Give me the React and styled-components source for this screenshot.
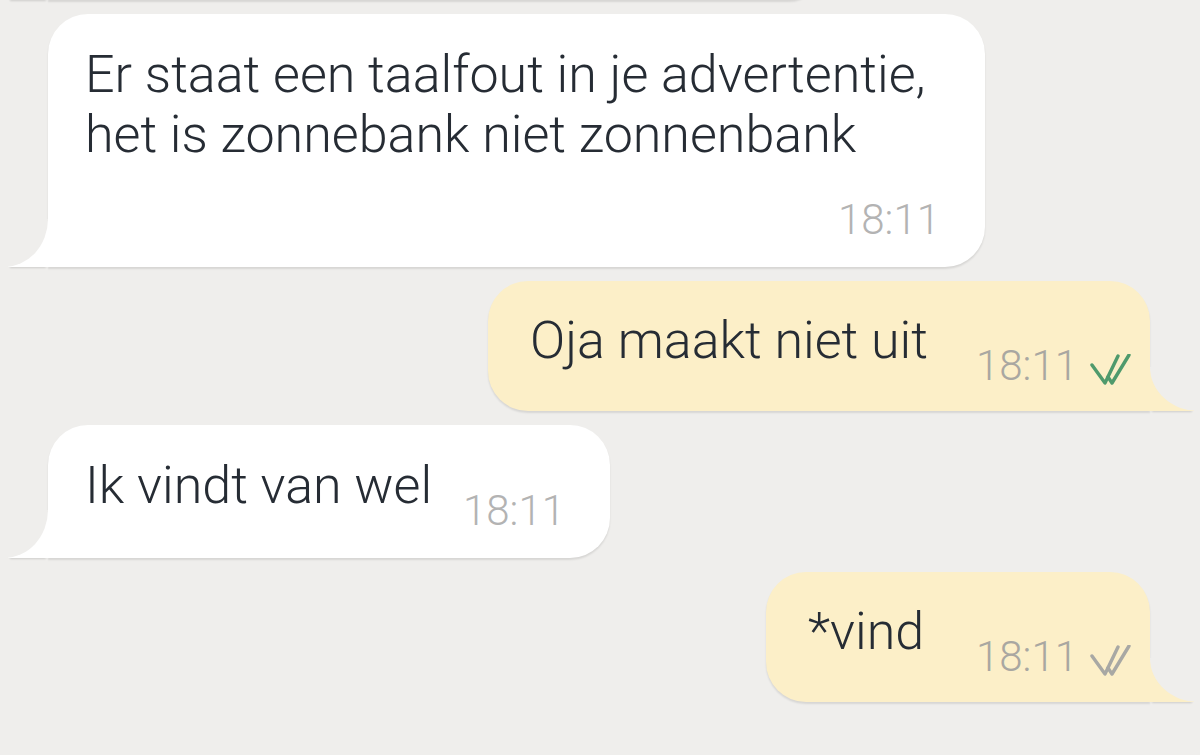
import React from 'react';
import styled, { createGlobalStyle, css } from 'styled-components';

const BG = '#efeeec';

const GlobalStyle = createGlobalStyle`
  html, body {
    margin: 0;
    padding: 0;
    background: ${BG};
    overflow: hidden;
  }
  body {
    font-family: Roboto, 'Liberation Sans', sans-serif;
  }
`;

const Chat = styled.div`
  display: flex;
  flex-direction: column;
  gap: 14px;
  width: 1200px;
  height: 755px;
  background: ${BG};
`;

const Row = styled.div`
  display: flex;
  justify-content: ${(p) => (p.$side === 'out' ? 'flex-end' : 'flex-start')};
  padding: ${(p) => (p.$side === 'out' ? '0 50px 0 0' : '0 0 0 48px')};
`;

// the tail: a filled box with a background-coloured rounded box over it
const tailIn = css`
  border-bottom-left-radius: 0;
  &::before,
  &::after {
    content: '';
    position: absolute;
    bottom: 0;
  }
  &::before {
    left: -40px;
    width: 40px;
    height: 46px;
    background: #ffffff;
    box-shadow: 0 3px 2px -2px rgba(0, 0, 0, 0.14);
  }
  &::after {
    left: -44px;
    width: 44px;
    height: 48px;
    background: ${BG};
    border-bottom-right-radius: 44px 48px;
  }
`;

const tailOut = css`
  border-bottom-right-radius: 0;
  &::before,
  &::after {
    content: '';
    position: absolute;
    bottom: 0;
  }
  &::before {
    right: -44px;
    width: 44px;
    height: 42px;
    background: #fcefc8;
    box-shadow: 0 3px 2px -2px rgba(0, 0, 0, 0.14);
  }
  &::after {
    right: -48px;
    width: 48px;
    height: 44px;
    background: ${BG};
    border-bottom-left-radius: 48px 44px;
  }
`;

const Bubble = styled.div`
  position: relative;
  box-sizing: border-box;
  width: ${(p) => p.$w}px;
  min-height: ${(p) => p.$h || 0}px;
  margin-top: ${(p) => p.$mt || 0}px;
  border-radius: 40px;
  background: ${(p) => (p.$side === 'out' ? '#fcefc8' : '#ffffff')};
  box-shadow: 0 2px 2px rgba(0, 0, 0, 0.1);
  display: flex;
  flex-direction: ${(p) => (p.$stack ? 'column' : 'row')};
  align-items: flex-start;
  padding: ${(p) =>
    p.$side === 'out' ? '30px 19px 23px 42px' : '31px 45px 25px 37px'};
  ${(p) => (p.$side === 'out' ? tailOut : tailIn)}
`;

const Text = styled.div`
  font-size: 52px;
  line-height: 60px;
  font-weight: 300;
  color: #262c34;
  white-space: nowrap;
`;

const Meta = styled.div`
  display: flex;
  align-items: center;
  gap: 12px;
  margin-top: 33px;
  margin-left: auto;
  height: 44px;
`;

const Time = styled.span`
  font-size: 42px;
  line-height: 44px;
  font-weight: 300;
  color: ${(p) => (p.$side === 'out' ? '#a9a7a1' : '#b3b3b3')};
`;

const Ticks = ({ color }) => (
  <svg width="41" height="31" viewBox="0 0 41 31" style={{ marginTop: 6 }}>
    <g
      fill="none"
      stroke={color}
      strokeWidth="3.4"
      strokeLinecap="round"
      strokeLinejoin="round"
    >
      <path d="M2 11 L15 29 L28 2" />
      <path d="M18 23 L22 29 L39 1" />
    </g>
  </svg>
);

const Message = ({ side, w, text, ticks, stack }) => (
  <Row $side={side}>
    <Bubble $side={side} $w={w} $stack={stack}>
      <Text>{text}</Text>
      <Meta>
        <Time $side={side}>18:11</Time>
        {ticks && <Ticks color={ticks} />}
      </Meta>
    </Bubble>
  </Row>
);

export default function App() {
  return (
    <>
      <GlobalStyle />
      <Chat>
        <Row $side="in">
          <Bubble $side="in" $w={772} $h={60} $mt={-62} />
        </Row>
        <Message
          side="in"
          w={937}
          stack
          text={
            <>
              Er staat een taalfout in je advertentie,
              <br />
              het is zonnebank niet zonnenbank
            </>
          }
        />
        <Message side="out" w={662} text="Oja maakt niet uit" ticks="#4f9a6c" />
        <Message side="in" w={562} text="Ik vindt van wel" />
        <Message side="out" w={384} text="*vind" ticks="#a8a8a4" />
      </Chat>
    </>
  );
}
